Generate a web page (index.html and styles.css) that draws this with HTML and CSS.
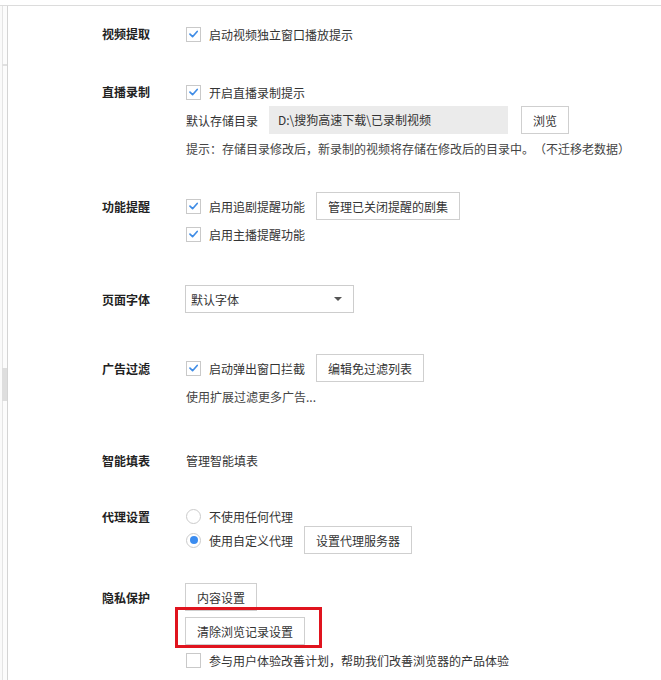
FILE: index.html
```html
<!DOCTYPE html>
<html lang="zh-CN">
<head>
<meta charset="utf-8">
<title>设置</title>
<link rel="stylesheet" href="styles.css">
</head>
<body>
<div class="frame">
  <div class="topbar"></div>
  <div class="shell">
    <aside class="rail">
      <div class="rail-tab"></div>
      <div class="rail-thumb"></div>
    </aside>
    <main class="panel">

      <section class="section s1">
        <div class="label">视频提取</div>
        <div class="line h22">
          <span class="check on"><svg viewBox="0 0 14 14" width="14" height="14"><path d="M3.2 7.2 L6 9.9 L11 4.3" fill="none" stroke="#3f8ce6" stroke-width="1.8" stroke-linecap="round" stroke-linejoin="round"/></svg></span>
          <span class="opt">启动视频独立窗口播放提示</span>
        </div>
      </section>

      <section class="section s2">
        <div class="label">直播录制</div>
        <div class="line h22">
          <span class="check on"><svg viewBox="0 0 14 14" width="14" height="14"><path d="M3.2 7.2 L6 9.9 L11 4.3" fill="none" stroke="#3f8ce6" stroke-width="1.8" stroke-linecap="round" stroke-linejoin="round"/></svg></span>
          <span class="opt">开启直播录制提示</span>
        </div>
        <div class="line h28">
          <span class="field-label">默认存储目录</span>
          <span class="path">D:\搜狗高速下载\已录制视频</span>
          <button class="btn btn-browse">浏览</button>
        </div>
        <div class="line h22">
          <span class="tip">提示：存储目录修改后，新录制的视频将存储在修改后的目录中。（不迁移老数据）</span>
        </div>
      </section>

      <section class="section s3">
        <div class="label">功能提醒</div>
        <div class="line h28">
          <span class="check on"><svg viewBox="0 0 14 14" width="14" height="14"><path d="M3.2 7.2 L6 9.9 L11 4.3" fill="none" stroke="#3f8ce6" stroke-width="1.8" stroke-linecap="round" stroke-linejoin="round"/></svg></span>
          <span class="opt">启用追剧提醒功能</span>
          <button class="btn">管理已关闭提醒的剧集</button>
        </div>
        <div class="line h22">
          <span class="check on"><svg viewBox="0 0 14 14" width="14" height="14"><path d="M3.2 7.2 L6 9.9 L11 4.3" fill="none" stroke="#3f8ce6" stroke-width="1.8" stroke-linecap="round" stroke-linejoin="round"/></svg></span>
          <span class="opt">启用主播提醒功能</span>
        </div>
      </section>

      <section class="section s4">
        <div class="label">页面字体</div>
        <div class="line h28">
          <div class="select"><span>默认字体</span><i class="caret"></i></div>
        </div>
      </section>

      <section class="section s5">
        <div class="label">广告过滤</div>
        <div class="line h28">
          <span class="check on"><svg viewBox="0 0 14 14" width="14" height="14"><path d="M3.2 7.2 L6 9.9 L11 4.3" fill="none" stroke="#3f8ce6" stroke-width="1.8" stroke-linecap="round" stroke-linejoin="round"/></svg></span>
          <span class="opt">启动弹出窗口拦截</span>
          <button class="btn">编辑免过滤列表</button>
        </div>
        <div class="line h22">
          <span class="tip">使用扩展过滤更多广告...</span>
        </div>
      </section>

      <section class="section s6">
        <div class="label">智能填表</div>
        <div class="line h22">
          <span class="link">管理智能填表</span>
        </div>
      </section>

      <section class="section s7">
        <div class="label">代理设置</div>
        <div class="line h20">
          <span class="radio"></span>
          <span class="opt">不使用任何代理</span>
        </div>
        <div class="line h28">
          <span class="radio on"></span>
          <span class="opt">使用自定义代理</span>
          <button class="btn">设置代理服务器</button>
        </div>
      </section>

      <section class="section s8">
        <div class="label">隐私保护</div>
        <div class="line h28">
          <button class="btn btn-first">内容设置</button>
        </div>
        <div class="line h28 gap6">
          <span class="highlight"><button class="btn btn-first">清除浏览记录设置</button></span>
        </div>
        <div class="line h22 gap4">
          <span class="check"></span>
          <span class="opt">参与用户体验改善计划，帮助我们改善浏览器的产品体验</span>
        </div>
      </section>

    </main>
  </div>
</div>
</body>
</html>
```

FILE: styles.css
```css
* { box-sizing: border-box; }

html, body {
  margin: 0;
  padding: 0;
  background: #ffffff;
}

body {
  font-family: "Noto Sans CJK SC", "Noto Sans", sans-serif;
  font-size: 12px;
  color: #333333;
  width: 661px;
  height: 680px;
  overflow: hidden;
  text-spacing-trim: space-all;
}

.frame {
  width: 661px;
  height: 680px;
}

.topbar {
  height: 6px;
  border-bottom: 1px solid #dcdcdc;
  background: #ffffff;
}

.shell {
  display: flex;
  height: 674px;
}

.rail {
  width: 8px;
  flex: none;
  border-left: 2px solid #fafafa;
  border-right: 1px solid #d4d4d4;
  box-shadow: inset 1px 0 0 #e4e4e4;
  background: #fcfcfc;
}

.rail-tab {
  height: 60px;
  border-bottom: 2px solid #e0e0e0;
}

.rail-thumb {
  margin-top: 302px;
  height: 33px;
  background: #dedede;
}

.panel {
  flex: 1;
  padding: 17px 0 0 94px;
}

.section {
  display: grid;
  grid-template-columns: 83px auto;
  row-gap: 3px;
  justify-content: start;
}

.label {
  grid-column: 1;
  grid-row: 1;
  align-self: center;
  font-weight: bold;
  color: #222222;
  white-space: nowrap;
}

.line {
  grid-column: 2;
  display: flex;
  align-items: center;
  white-space: nowrap;
}

.h20 { height: 20px; }
.h22 { height: 22px; }
.h28 { height: 28px; }

.s1 .label, .s2 .label { margin-top: -1px; }

.s2 { margin-top: 36px; }
.s3 { margin-top: 33px; }
.s4 { margin-top: 40px; }
.s5 { margin-top: 41px; }
.s6 { margin-top: 42px; }
.s7 { margin-top: 35px; row-gap: 0; }
.s8 { margin-top: 29px; row-gap: 0; }

.gap6 { margin-top: 6px; }
.gap4 { margin-top: 4px; }

.check {
  width: 15px;
  height: 15px;
  border: 1px solid #c9c9c9;
  background: #ffffff;
  display: inline-flex;
  align-items: center;
  justify-content: center;
  margin-left: 1px;
  flex: none;
}

.check svg { display: block; }

.opt {
  margin-left: 8px;
  color: #333333;
}

.radio {
  width: 15px;
  height: 15px;
  border-radius: 50%;
  border: 1px solid #cbcbcb;
  background: #ffffff;
  margin-left: 1px;
  flex: none;
  display: inline-flex;
  align-items: center;
  justify-content: center;
}

.radio.on::after {
  content: "";
  width: 8px;
  height: 8px;
  border-radius: 50%;
  background: #3b8cf0;
}

.btn {
  font-family: inherit;
  font-size: 12px;
  color: #333333;
  background: #ffffff;
  border: 1px solid #cfcfcf;
  height: 28px;
  padding: 0 11px;
  margin: 0 0 0 11px;
  border-radius: 0;
  cursor: pointer;
}

.btn-first { margin-left: 0; }

.btn-browse {
  margin-left: 13px;
  padding: 0 11px;
}

.field-label {
  margin-left: 1px;
  color: #333333;
}

.path {
  margin-left: 11px;
  width: 239px;
  height: 28px;
  line-height: 28px;
  padding-left: 9px;
  background: #ebebeb;
  color: #333333;
}

.tip {
  margin-left: 1px;
  color: #444444;
}

.link {
  margin-left: 1px;
  color: #333333;
}

.select {
  width: 169px;
  height: 28px;
  border: 1px solid #cdcdcd;
  background: #ffffff;
  display: flex;
  align-items: center;
  justify-content: space-between;
  padding: 0 11px 0 5px;
}

.caret {
  width: 0;
  height: 0;
  border-left: 4px solid transparent;
  border-right: 4px solid transparent;
  border-top: 4px solid #555555;
}

.highlight {
  position: relative;
  display: inline-flex;
}

.highlight::after {
  content: "";
  position: absolute;
  top: -10px;
  left: -10px;
  right: -17px;
  bottom: -3px;
  border: 3px solid #e0141e;
  pointer-events: none;
}
```
